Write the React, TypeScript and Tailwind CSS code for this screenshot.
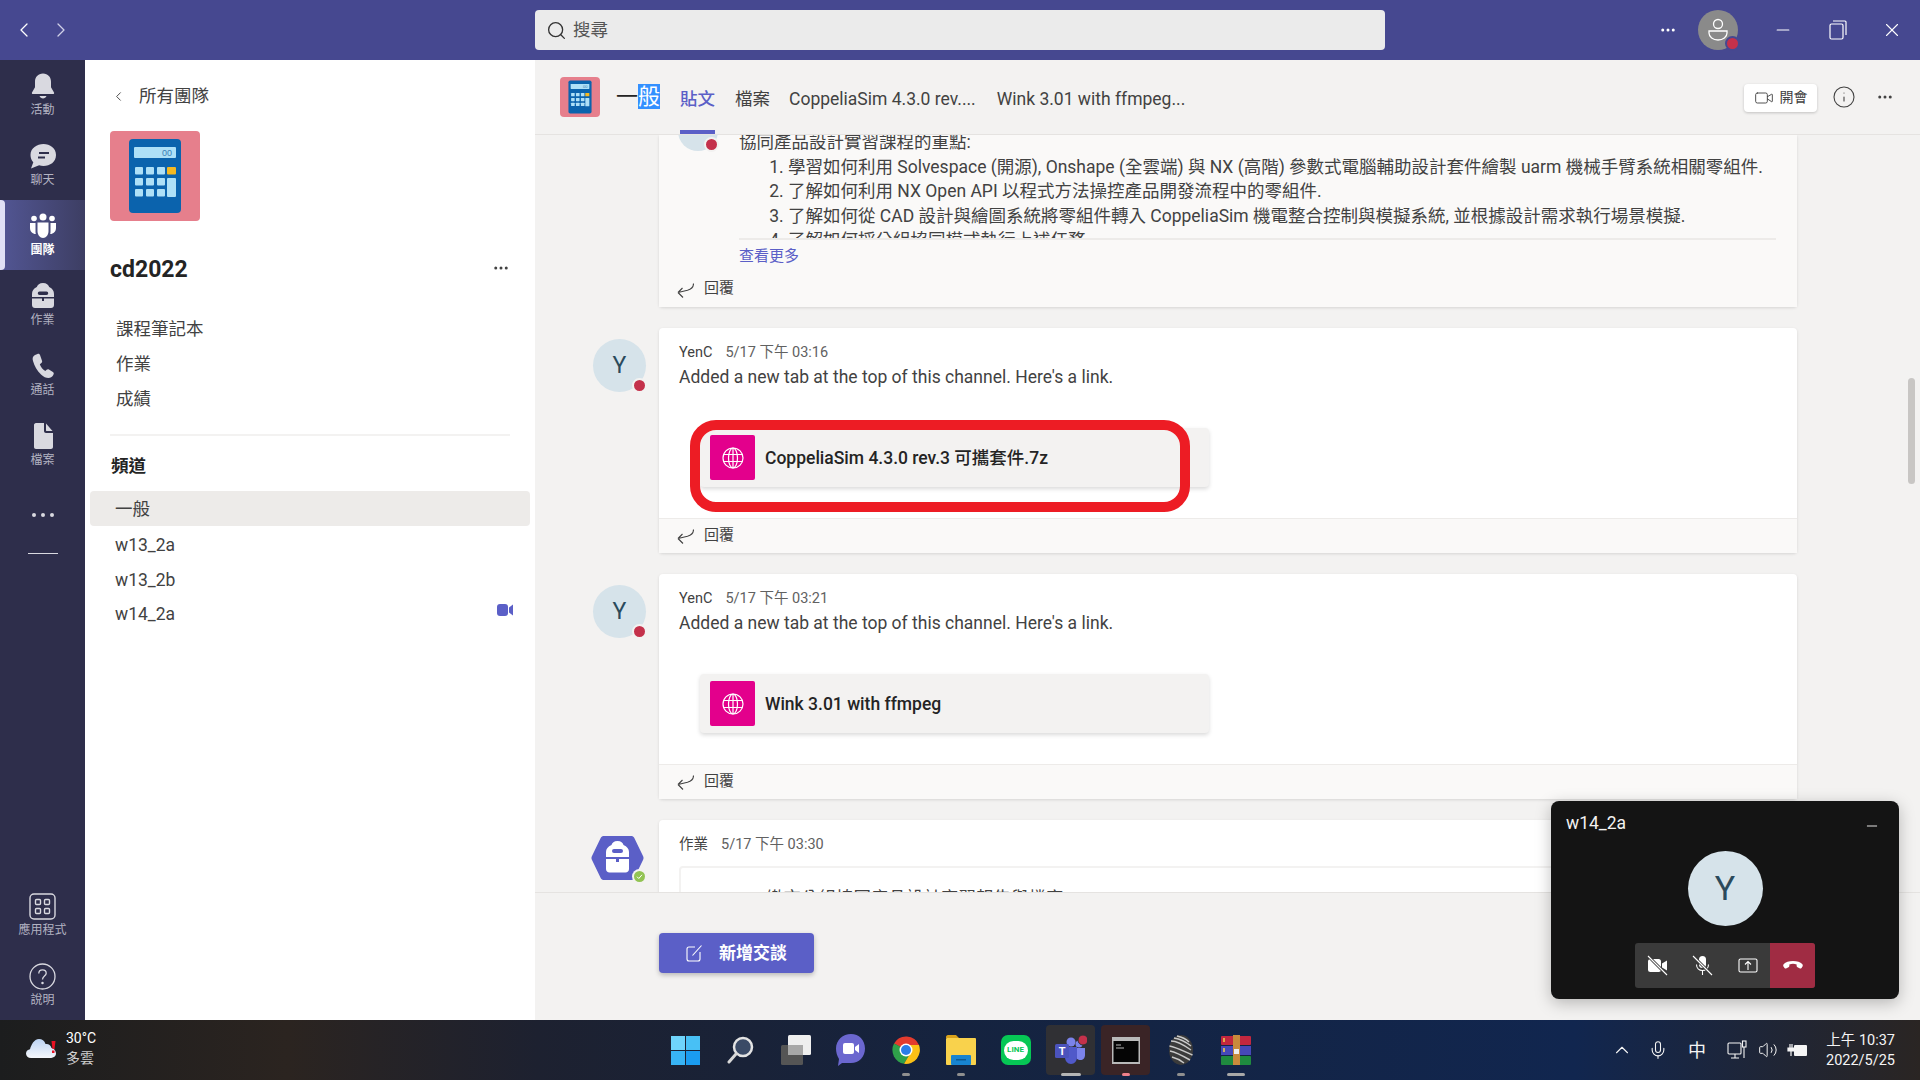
import { ChevronLeft, ChevronRight, Search, MoreHorizontal, Minus, X, Info, Video, ChevronUp, Mic, Volume2 } from 'lucide-react'
import type { ReactNode } from 'react'

const Calculator = ({ size }: { size: number }) => (
  <svg width={size} height={size} viewBox="0 0 90 90" className="block">
    <rect x="19" y="8" width="52" height="74" rx="4" fill="#0b63ad" />
    <rect x="24" y="16" width="42" height="11" rx="1" fill="#aee0f7" />
    <text x="52" y="25" fontSize="9" fill="#3b7fb5" fontFamily="Liberation Sans">00</text>
    {[25, 36, 47].map((x) =>
      [36, 47, 58].map((y) => <rect key={`${x}-${y}`} x={x} y={y} width="8" height="7.5" rx="1" fill="#aee0f7" />),
    )}
    <rect x="57" y="36" width="9" height="7.5" rx="1" fill="#f5b921" />
    <rect x="57" y="47" width="9" height="19" rx="1" fill="#aee0f7" />
  </svg>
)

const railIcons: Record<string, ReactNode> = {
  bell: (
    <svg width="28" height="28" viewBox="0 0 28 28" fill="currentColor">
      <path d="M14 1.500c-5 0-8 3.600-8 8.300v5.400l-3 5.300c-.4.800 0 1.500.9 1.500h20.200c.9 0 1.300-.7.9-1.500l-3-5.300V9.800c0-4.700-3-8.300-8-8.300z" />
      <path d="M10.500 24h7c-.6 1.600-2 2.500-3.500 2.500s-2.900-.9-3.500-2.500z" />
    </svg>
  ),
  chat: (
    <svg width="28" height="28" viewBox="0 0 28 28" fill="currentColor">
      <path fillRule="evenodd" d="M14.500 2C21 2 27 6 27 13s-6 11-12.500 11c-1.600 0-3-.3-4.400-.8L2 26.500l2.300-6.300C2.500 18.300 1.500 16 1.500 13 1.500 6 8 2 14.500 2zM10 10v2h10v-2H10zm-1 4.500v2h7v-2H9z" />
    </svg>
  ),
  team: (
    <svg width="28" height="28" viewBox="0 0 28 28" fill="currentColor">
      <circle cx="14" cy="5" r="3.500" />
      <circle cx="5" cy="6.500" r="2.800" />
      <circle cx="23" cy="6.500" r="2.800" />
      <path d="M8.500 10.500h11V19c0 4-2.500 7-5.500 7s-5.500-3-5.500-7v-8.500z" />
      <path d="M1 11h5.500v8.500c0 .9.100 1.700.3 2.500C3.500 22 1 19.500 1 16v-5zM21.500 11H27v5c0 3.500-2.500 6-5.800 6 .2-.8.300-1.600.300-2.500V11z" />
    </svg>
  ),
  bag: (
    <svg width="28" height="28" viewBox="0 0 28 28" fill="currentColor">
      <path fillRule="evenodd" d="M14 1c3.500 0 5.500 1.800 6.200 4C23.500 6.500 25 9 25 12v3H3v-3c0-3 1.500-5.500 4.800-7C8.500 2.800 10.500 1 14 1zm-3.500 8.500a1.500 1.500 0 0 0 0 3.500h7a1.500 1.500 0 0 0 0-3.500h-7z" />
      <path d="M3 16.500h10v2.500h2v-2.500h10V23c0 1.700-1.300 3-3 3H6c-1.700 0-3-1.300-3-3v-6.500z" />
    </svg>
  ),
  call: (
    <svg width="28" height="28" viewBox="0 0 28 28" fill="currentColor">
      <path d="M8.500 2 6 3C4 4 3 6 4 9c1.500 5 4 9.500 8 13.500 2.500 2.500 5 3.500 7.500 3.500 2 0 3.500-1 4.500-2.500l.6-1.200c.4-.9.100-1.700-.7-2.200l-4-2.600c-.8-.5-1.600-.4-2.300.3l-1.300 1.300c-2.500-1.500-4.500-4-5.500-6.800l1.600-1.300c.7-.6.9-1.400.6-2.200L11 3c-.4-.9-1.500-1.400-2.500-1z" />
    </svg>
  ),
  file: (
    <svg width="28" height="28" viewBox="0 0 28 28" fill="currentColor">
      <path d="M5 3c0-1 .8-2 2-2h8v8c0 1 .8 2 2 2h7v14c0 1.200-.9 2-2 2H7c-1.200 0-2-.8-2-2V3z" />
      <path d="M17 1.500 23.500 9H17.500c-.3 0-.5-.2-.5-.5v-7z" />
    </svg>
  ),
  apps: (
    <svg width="27" height="27" viewBox="0 0 27 27" fill="none" stroke="currentColor" strokeWidth="1.400">
      <rect x="1" y="1" width="25" height="25" rx="4" />
      <rect x="6.500" y="6.500" width="5" height="5" rx="1" />
      <rect x="15.500" y="6.500" width="5" height="5" rx="1" />
      <rect x="6.500" y="15.500" width="5" height="5" rx="1" />
      <rect x="15.500" y="15.500" width="5" height="5" rx="1" />
    </svg>
  ),
  help: (
    <svg width="27" height="27" viewBox="0 0 27 27" fill="none" stroke="currentColor" strokeWidth="1.300">
      <circle cx="13.500" cy="13.500" r="12.500" />
      <path d="M9.800 10.500c0-2.200 1.600-3.700 3.700-3.700s3.700 1.400 3.700 3.400c0 2.800-3.700 3-3.700 6.300" />
      <circle cx="13.500" cy="20" r=".6" fill="currentColor" />
    </svg>
  ),
}

const RailItem = ({ icon, label, active }: { icon: string; label: string; active?: boolean }) => (
  <div
    className={`relative flex h-[70px] w-full flex-col items-center justify-center gap-[2px] text-[12px] leading-[16px] ${
      active
        ? 'bg-[linear-gradient(90deg,#525694,#3d3e63)] font-bold text-white before:absolute before:left-0 before:top-0 before:h-full before:w-[5px] before:rounded-r-sm before:bg-[#dfe0f5]'
        : 'text-[#b3b3c2]'
    }`}
  >
    <span className={active ? 'text-white' : 'text-[#d9d9e0]'}>{railIcons[icon]}</span>
    <span>{label}</span>
  </div>
)

const Rail = () => (
  <nav className="flex h-full w-[85px] shrink-0 flex-col items-center bg-[#2e2e4b]">
    <RailItem icon="bell" label="活動" />
    <RailItem icon="chat" label="聊天" />
    <RailItem icon="team" label="團隊" active />
    <RailItem icon="bag" label="作業" />
    <RailItem icon="call" label="通話" />
    <RailItem icon="file" label="檔案" />
    <div className="mt-[33px] flex gap-[5px]">
      <i className="size-[4px] rounded-full bg-[#d9d9e0]" />
      <i className="size-[4px] rounded-full bg-[#d9d9e0]" />
      <i className="size-[4px] rounded-full bg-[#d9d9e0]" />
    </div>
    <div className="mt-[36px] h-px w-[30px] bg-[#d9d9e0]" />
    <div className="mt-auto flex w-full flex-col">
      <RailItem icon="apps" label="應用程式" />
      <RailItem icon="help" label="說明" />
    </div>
  </nav>
)

const TeamPanel = () => (
  <aside className="h-full w-[450px] shrink-0 bg-white text-[17.5px] text-[#424242]">
    <div className="flex h-[71px] items-center pl-[26px] pt-[1px]">
      <ChevronLeft size={15} strokeWidth={1.500} />
      <span className="ml-[13px]">所有團隊</span>
    </div>
    <div className="ml-[25px] size-[90px] rounded-[4px] bg-[#e67f8c]">
      <Calculator size={90} />
    </div>
    <div className="ml-[25px] mr-[25px] mt-[27px] flex items-center justify-between">
      <h1 className="pt-[4px] text-[23px] font-bold leading-[36px] text-[#242424]">cd2022</h1>
      <MoreHorizontal size={18} />
    </div>
    <ul className="ml-[31px] mt-[28px] flex flex-col gap-[9px] leading-[26px]">
      <li>課程筆記本</li>
      <li>作業</li>
      <li>成績</li>
    </ul>
    <div className="mx-[25px] mt-[22px] h-[2px] bg-[#f3f2f1]" />
    <h2 className="ml-[26px] mt-[17px] font-bold leading-[26px] text-[#242424]">頻道</h2>
    <ul className="mx-[5px] mt-[12px] flex flex-col">
      <li className="h-[35px] rounded-[4px] bg-[#edebe9] pl-[25px] leading-[36px]">一般</li>
      <li className="h-[35px] pl-[25px] leading-[38px]">w13_2a</li>
      <li className="h-[35px] pl-[25px] leading-[38px]">w13_2b</li>
      <li className="flex h-[35px] items-center justify-between pl-[25px] pr-[17px] leading-[38px]">
        <span>w14_2a</span>
        <svg width="16" height="12" viewBox="0 0 16 12" fill="#5b5fc7" className="-mt-[8px]">
          <rect x="0" y="0" width="11" height="12" rx="3" />
          <path d="M12 3.500 16 .5v11l-4-3z" />
        </svg>
      </li>
    </ul>
  </aside>
)

const Avatar = ({ size = 'big' }: { size?: string }) => (
  <div
    className={`relative shrink-0 rounded-full bg-[#d6e3ea] text-center text-[#2b4a5c] ${
      size === 'big' ? 'size-[53px] text-[23px] leading-[53px]' : '-mt-[24px] size-[40px]'
    }`}
  >
    {size === 'big' && 'Y'}
    <i className="absolute bottom-[-1px] right-[-1px] size-[15px] rounded-full border-2 border-[#f3f2f1] bg-[#c4314b]" />
  </div>
)

const Reply = () => (
  <div className="flex h-[35px] items-center gap-[10px] border-t border-[#edebe9] bg-[#faf9f8] pl-[18px] text-[15px] text-[#424242]">
    <svg width="17" height="15" viewBox="0 0 17 15" fill="none" stroke="#424242" strokeWidth="1.100" className="mt-[1px]">
      <path d="M16.500 .5c0 3.200-2.500 5.700-6 6.700L1 9.500M1 9.500l4.500-4.500M1 9.500l5 5" />
    </svg>
    <span className="-mt-[2px]">回覆</span>
  </div>
)

const LinkMessage = ({ time, title, mark }: { time: string; title: string; mark?: boolean }) => (
  <div className="flex pl-[58px]">
    <div className="mr-[13px] mt-[11px]">
      <Avatar />
    </div>
    <article className="flex h-[225px] w-[1138px] flex-col rounded-[4px] bg-white shadow-[0_1px_3px_rgba(0,0,0,0.12)]">
      <div className="flex-1 pl-[20px] pt-[13px]">
        <div className="flex items-center gap-[13px] text-[14.500px] leading-[24px] text-[#616161]">
          <span className="text-[#424242]">YenC</span>
          <span>{time}</span>
        </div>
        <p className="text-[17.500px] leading-[24px] text-[#424242]">Added a new tab at the top of this channel. Here's a link.</p>
        <div className="relative ml-[21px] mt-[39px] flex h-[59px] w-[509px] items-center rounded-[4px] bg-[#f3f2f1] pl-[10px] shadow-[0_2px_4px_rgba(0,0,0,0.15)]">
          <div className="flex size-[45px] items-center justify-center rounded-[2px] bg-[#e3008c]">
            <svg width="22" height="22" viewBox="0 0 22 22" fill="none" stroke="#fff" strokeWidth="1.200">
              <circle cx="11" cy="11" r="10" />
              <ellipse cx="11" cy="11" rx="4.500" ry="10" />
              <path d="M11 1v20M1.800 7.500h18.400M1.800 14.500h18.400" />
            </svg>
          </div>
          <span className="ml-[10px] mt-[2px] text-[17.500px] font-medium text-[#242424]">{title}</span>
          {mark && (
            <div className="absolute left-[-10px] top-[-8px] h-[92px] w-[500px] rounded-[26px] border-[10px] border-[#ed1c24]" />
          )}
        </div>
      </div>
      <Reply />
    </article>
  </div>
)

const MessageList = () => (
  <div className="relative h-[758px] shrink-0 overflow-hidden border-b border-[#e5e3e1]">
    <div className="flex flex-col gap-[21px]">
      <div className="flex pl-[124px]">
        <article className="flex h-[172px] w-[1138px] flex-col rounded-b-[4px] bg-[#faf9f8] shadow-[0_1px_3px_rgba(0,0,0,0.12)]">
          <div className="flex pl-[19px]">
            <Avatar size="small" />
            <div className="ml-[21px] mr-[21px] h-[105px] flex-1 overflow-hidden border-b-2 border-[#edebe9] text-[17.500px] leading-[24.500px] text-[#424242]">
              <div className="-mt-[5px]">
                <p>協同產品設計實習課程的重點:</p>
                <ol className="list-decimal pl-[49px]">
                  <li>學習如何利用 Solvespace (開源), Onshape (全雲端) 與 NX (高階) 參數式電腦輔助設計套件繪製 uarm 機械手臂系統相關零組件.</li>
                  <li>了解如何利用 NX Open API 以程式方法操控產品開發流程中的零組件.</li>
                  <li>了解如何從 CAD 設計與繪圖系統將零組件轉入 CoppeliaSim 機電整合控制與模擬系統, 並根據設計需求執行場景模擬.</li>
                  <li>了解如何採分組協同模式執行上述任務.</li>
                </ol>
              </div>
            </div>
          </div>
          <a className="ml-[80px] mt-[5px] text-[15px] leading-[22px] text-[#5b5fc7]">查看更多</a>
          <div className="mt-auto [&>div]:border-t-0">
            <Reply />
          </div>
        </article>
      </div>
      <LinkMessage time="5/17 下午 03:16" title="CoppeliaSim 4.3.0 rev.3 可攜套件.7z" mark />
      <LinkMessage time="5/17 下午 03:21" title="Wink 3.01 with ffmpeg" />
      <div className="flex pl-[56px]">
        <div className="relative mr-[15px] mt-[15px] h-[46px] w-[53px] shrink-0">
          <svg width="53" height="46" viewBox="0 0 53 46">
            <path d="M13 1h27c1.500 0 2.500.6 3.200 1.800L52 21c.7 1.300.7 2.700 0 4l-8.800 18.200C42.500 44.400 41.500 45 40 45H13c-1.500 0-2.500-.6-3.200-1.800L1 25c-.7-1.300-.7-2.700 0-4L9.800 2.800C10.500 1.600 11.500 1 13 1z" fill="#5b5fc7" />
            <path d="M26.500 6c3.500 0 5.500 2 6 4 3.500 1.500 5.500 4 5.500 7v5H15v-5c0-3 2-5.500 5.500-7 .5-2 2.500-4 6-4z" fill="#fff" />
            <path d="M15 24h10v3h3v-3h10v10c0 2-1.500 3.500-3.500 3.500h-16c-2 0-3.500-1.500-3.500-3.500V24z" fill="#fff" />
            <rect x="21" y="14" width="11" height="4" rx="2" fill="#5b5fc7" />
          </svg>
          <svg width="15" height="15" viewBox="0 0 15 15" className="absolute bottom-[-3px] right-[-3px]">
            <circle cx="7.500" cy="7.500" r="7.500" fill="#f3f2f1" />
            <circle cx="7.500" cy="7.500" r="5.500" fill="#92c353" />
            <path d="M5 7.700l1.800 1.800 3.200-3.700" stroke="#fff" strokeWidth="1" fill="none" />
          </svg>
        </div>
        <article className="h-[200px] w-[1138px] rounded-[4px] bg-white pl-[20px] pt-[13px] shadow-[0_1px_3px_rgba(0,0,0,0.12)]">
          <div className="flex items-center gap-[13px] text-[14.500px] leading-[24px] text-[#616161]">
            <span className="text-[#424242]">作業</span>
            <span>5/17 下午 03:30</span>
          </div>
          <div className="mt-[9px] h-[120px] rounded-[4px] border-2 border-[#f3f2f1] pl-[85px] pt-[17px] text-[17.500px] text-[#424242]">
            繳交分組協同產品設計實習報告與檔案
          </div>
        </article>
      </div>
    </div>
  </div>
)

const ChannelHeader = () => (
  <header className="flex h-[75px] shrink-0 items-center border-b border-[#e5e3e1] pl-[25px] pr-[26px] text-[17.500px] text-[#424242]">
    <div className="h-[40px] w-[40px] overflow-hidden rounded-[4px] bg-[#e67f8c]">
      <Calculator size={40} />
    </div>
    <div className="ml-[16px] text-[22px] leading-[30px] text-[#242424]">
      一<span className="bg-[#3390ff] text-white">般</span>
    </div>
    <div className="relative ml-[20px] flex h-full items-center pt-[4px] font-medium text-[#5b5fc7]">
      貼文
      <i className="absolute bottom-0 left-0 h-[4px] w-full bg-[#5b5fc7]" />
    </div>
    <span className="ml-[20px] pt-[4px]">檔案</span>
    <span className="ml-[19px] pt-[4px]">CoppeliaSim 4.3.0 rev....</span>
    <span className="ml-[21px] pt-[4px]">Wink 3.01 with ffmpeg...</span>
    <div className="ml-auto mt-[1px] flex h-[28px] w-[73px] items-center justify-center gap-[6px] rounded-[4px] bg-white text-[14px] shadow-[0_1px_3px_rgba(0,0,0,0.2)]">
      <Video size={20} strokeWidth={1.100} />
      <span>開會</span>
    </div>
    <Info size={24} strokeWidth={1.100} className="ml-[15px]" />
    <MoreHorizontal size={18} className="ml-[20px]" />
  </header>
)

const CallWindow = () => (
  <div className="absolute bottom-[81px] right-[21px] flex h-[198px] w-[348px] flex-col items-center rounded-[8px] bg-[#141414] shadow-[0_4px_16px_rgba(0,0,0,0.25)]">
    <div className="flex w-full items-center justify-between pl-[15px] pr-[19px] pt-[10px] text-[17.500px] leading-[24px] text-[#f3f2f1]">
      <span>w14_2a</span>
      <Minus size={16} strokeWidth={1.400} className="mt-[6px]" />
    </div>
    <div className="mt-[16px] size-[75px] rounded-full bg-[#d6e3ea] text-center text-[34px] leading-[75px] text-[#2b4a5c]">Y</div>
    <div className="mt-[17px] flex h-[45px] w-[180px] overflow-hidden rounded-[3px] bg-[#3a3a3a] text-white">
      <div className="flex w-[45px] items-center justify-center">
        <svg width="21" height="21" viewBox="0 0 21 21">
          <rect x="1" y="4" width="13" height="13" rx="2.500" fill="#fff" />
          <path d="M15 8.500 20 5.500v10L15 12.500z" fill="#fff" />
          <path d="M1 1l19 19" stroke="#3a3a3a" strokeWidth="3" />
          <path d="M1 1l19 19" stroke="#fff" strokeWidth="1.100" />
        </svg>
      </div>
      <div className="flex w-[45px] items-center justify-center">
        <svg width="21" height="21" viewBox="0 0 21 21" fill="none">
          <rect x="7" y="1" width="7" height="12" rx="3.500" fill="#fff" />
          <path d="M4.500 9.500c0 3.500 2.500 6 6 6s6-2.500 6-6M10.500 15.500V20" stroke="#fff" strokeWidth="1.100" />
          <path d="M1 1l19 19" stroke="#3a3a3a" strokeWidth="3" />
          <path d="M1 1l19 19" stroke="#fff" strokeWidth="1.100" />
        </svg>
      </div>
      <div className="flex w-[45px] items-center justify-center">
        <svg width="20" height="15" viewBox="0 0 20 15" fill="none" stroke="#fff" strokeWidth="1.100">
          <rect x="1" y="1" width="18" height="13" rx="1.500" />
          <path d="M10 12V4M7 6.500 10 3.500l3 3" />
        </svg>
      </div>
      <div className="flex w-[45px] items-center justify-center bg-[#a02c43]">
        <svg width="20" height="9" viewBox="0 0 20 9" fill="#fff">
          <path d="M10 0C6 0 2.500 1 .8 3c-.8 1-.8 2 0 3l.7 1c.5.600 1.300.7 2 .3l2-1c.7-.4 1-1 .9-1.800l-.1-1c1.200-.5 2.500-.7 3.700-.7s2.500.2 3.700.7l-.1 1c-.1.800.2 1.400.9 1.800l2 1c.7.4 1.500.3 2-.3l.7-1c.8-1 .8-2 0-3C17.500 1 14 0 10 0z" />
        </svg>
      </div>
    </div>
  </div>
)

const TaskSlot = ({ children, tile, bar }: { children: ReactNode; tile?: string; bar?: string }) => (
  <div className="relative flex h-[50px] w-[55px] items-center justify-center">
    {tile && <div className={`absolute inset-y-0 left-[3px] right-[3px] rounded-[4px] ${tile}`} />}
    <div className="relative">{children}</div>
    {bar && <i className={`absolute bottom-[-1px] left-1/2 h-[3px] -translate-x-1/2 rounded-full ${bar}`} />}
  </div>
)

const Taskbar = () => (
  <footer className="relative flex h-[60px] shrink-0 items-center justify-center bg-[linear-gradient(90deg,#1c1d1e_0%,#2b2420_15%,#1d2130_28%,#15233f_50%,#11264f_82%,#2a2523_100%)] pl-[1px] text-white">
    <div className="absolute left-[25px] top-[8px] flex items-center">
      <svg width="32" height="24" viewBox="0 0 32 24">
        <defs>
          <linearGradient id="cloud" x1="0" y1="0" x2="0" y2="1">
            <stop offset="0" stopColor="#bcd3f3" />
            <stop offset="1" stopColor="#f5f7fb" />
          </linearGradient>
        </defs>
        <path d="M6 22c-3 0-5-2-5-4.500 0-2.500 2-4 4-4.200C6 9 9 3 14 3c3 0 5.500 1.500 6.500 5 3-.5 5 1 6 4 2 .3 4.500 2.500 4.500 5.500S28 22 25 22H6z" fill="url(#cloud)" />
        <path d="M26.500 5h4l-1 8h-2zM27 14.500h2.500v2.500H27z" fill="#e81123" />
      </svg>
      <div className="ml-[9px] text-[14px] leading-[20px]">
        <div>30°C</div>
        <div className="text-[#d0d0d0]">多雲</div>
      </div>
    </div>
    <TaskSlot>
      <svg width="29" height="29" viewBox="0 0 29 29">
        <rect x="0" y="0" width="14" height="14" fill="#6fd4fb" />
        <rect x="15" y="0" width="14" height="14" fill="#48c0f5" />
        <rect x="0" y="15" width="14" height="14" fill="#38b4f5" />
        <rect x="15" y="15" width="14" height="14" fill="#1a9cf0" />
      </svg>
    </TaskSlot>
    <TaskSlot>
      <svg width="28" height="28" viewBox="0 0 28 28" fill="none">
        <circle cx="16" cy="11" r="9" fill="#3a4a66" stroke="#e3e3e3" strokeWidth="2.500" />
        <path d="M9 18 2 26" stroke="#d8d8d8" strokeWidth="3" strokeLinecap="round" />
      </svg>
    </TaskSlot>
    <TaskSlot>
      <svg width="30" height="30" viewBox="0 0 30 30">
        <rect x="0" y="10" width="22" height="20" rx="1.500" fill="#555" />
        <rect x="7" y="0" width="23" height="20" rx="1.500" fill="#efefef" />
        <rect x="7" y="10" width="15" height="10" fill="#a8a8a8" />
      </svg>
    </TaskSlot>
    <TaskSlot>
      <svg width="29" height="34" viewBox="0 0 29 34">
        <path d="M15 1c8 0 14 6 14 14.500S23 30 15 30H6l-4 3 1-7C1 23 0 19 0 15.500 0 7 7 1 15 1z" fill="#6b67cf" />
        <rect x="7" y="10" width="11" height="11" rx="2" fill="#fff" />
        <path d="M19 14l4-3v9l-4-3z" fill="#fff" />
      </svg>
    </TaskSlot>
    <TaskSlot bar="w-[8px] bg-[#8f8f8f]">
      <svg width="28" height="28" viewBox="0 0 28 28">
        <path d="M14 14 2 7.500A14 14 0 0 1 27 9z" fill="#e33b2e" />
        <path d="M2 7.500A14 14 0 0 0 12 27.800L19 16z" fill="#2fa04a" />
        <path d="M27 9A14 14 0 0 1 12 27.800L19 16 14 9z" fill="#fbc116" />
        <circle cx="14" cy="14" r="6.500" fill="#fff" />
        <circle cx="14" cy="14" r="5" fill="#2b7de9" />
      </svg>
    </TaskSlot>
    <TaskSlot bar="w-[8px] bg-[#8f8f8f]">
      <svg width="30" height="30" viewBox="0 0 30 30">
        <path d="M0 2c0-1 .7-2 2-2h8l3 3h-13z" fill="#d9a21b" />
        <rect x="0" y="3" width="30" height="27" fill="#f9d24c" rx="1" />
        <rect x="5" y="20" width="20" height="10" rx="1" fill="#1884d0" />
        <rect x="10" y="24" width="10" height="1.500" fill="#0d5a94" />
      </svg>
    </TaskSlot>
    <TaskSlot>
      <div className="flex size-[30px] items-center justify-center rounded-[7px] bg-[#06c755]">
        <div className="flex h-[19px] w-[24px] items-center justify-center rounded-full bg-white text-[8px] font-bold leading-none text-[#06c755]">LINE</div>
      </div>
    </TaskSlot>
    <TaskSlot tile="bg-[#303034]" bar="w-[20px] bg-[#b5b5b5]">
      <svg width="32" height="30" viewBox="0 0 32 30">
        <circle cx="24" cy="9" r="3.500" fill="#7b83eb" />
        <circle cx="16" cy="7" r="4.500" fill="#7b83eb" />
        <path d="M10 12h12v10c0 4-2.500 7-6 7s-6-3-6-7z" fill="#5059c9" />
        <path d="M22 13h8v7c0 3-2 5-4.500 5-1.500 0-2.500-.5-3.500-1z" fill="#7b83eb" />
        <rect x="0" y="9" width="14" height="14" rx="1.500" fill="#4b53bc" />
        <text x="7" y="20" textAnchor="middle" fontSize="11" fontWeight="700" fill="#fff" fontFamily="Liberation Sans">T</text>
        <circle cx="28" cy="5" r="5" fill="#c4314b" stroke="#303034" />
      </svg>
    </TaskSlot>
    <TaskSlot tile="bg-[#3a2426]" bar="w-[8px] bg-[#f0808a]">
      <svg width="28" height="27" viewBox="0 0 28 27">
        <rect x="0" y="0" width="28" height="27" fill="#b9b9b9" />
        <rect x="1.500" y="4" width="25" height="21" fill="#050505" />
        <path d="M4 8h5M4 11h8" stroke="#bbb" strokeWidth="1" />
      </svg>
    </TaskSlot>
    <TaskSlot bar="w-[8px] bg-[#8f8f8f]">
      <svg width="28" height="30" viewBox="0 0 28 30">
        <ellipse cx="14" cy="15" rx="12" ry="15" fill="#3b3b3b" />
        <path d="M4 6c6 0 13 4 20 9M2.500 11c6 1 14 5 23 9M3 16c5 1 13 5 20 9M5 22c4 1 8 3 12 6M7 3c6 1 12 4 17 8M10 1c5 1 9 3 12 6" stroke="#c9c9c9" strokeWidth="1.500" fill="none" />
      </svg>
    </TaskSlot>
    <TaskSlot bar="w-[18px] bg-[#a8a8a8]">
      <svg width="30" height="30" viewBox="0 0 30 30">
        <rect x="0" y="1" width="30" height="9" rx="1" fill="#c3273f" />
        <rect x="0" y="11" width="30" height="9" fill="#4648b8" />
        <rect x="0" y="21" width="30" height="9" rx="1" fill="#1f8a3f" />
        <rect x="12" y="0" width="7" height="30" fill="#c98a3c" />
        <rect x="13" y="14" width="5" height="5" fill="#eee" />
        <path d="M3 3v4M3 13v4" stroke="#f5d24c" strokeWidth="1.500" />
      </svg>
    </TaskSlot>
    <div className="absolute right-[25px] top-0 flex h-full items-center text-[#f5f5f5]">
      <ChevronUp size={22} strokeWidth={1.200} className="mr-[15px]" />
      <Mic size={20} strokeWidth={1.300} className="mr-[20px]" />
      <span className="mr-[21px] text-[18px]">中</span>
      <svg width="20" height="20" viewBox="0 0 20 20" fill="none" stroke="#f5f5f5" strokeWidth="1.100" className="mr-[11px]">
        <rect x="1" y="3" width="13" height="11" rx="1" />
        <path d="M4 18h8M8 14v4" />
        <rect x="15.500" y="1" width="3.500" height="6" />
        <path d="M17 7v11" />
      </svg>
      <Volume2 size={20} strokeWidth={1.200} className="mr-[9px]" />
      <svg width="22" height="18" viewBox="0 0 22 18" className="mr-[14px]">
        <rect x="7" y="4" width="13" height="11" rx="1" fill="#f5f5f5" />
        <path d="M1 7h6v3H1zM3 3v4M5 3v4M4 10v5" stroke="#f5f5f5" strokeWidth="1.200" fill="#f5f5f5" />
      </svg>
      <div className="w-[72px] pt-[1px] text-right text-[14.500px] leading-[20px]">
        <div>上午 10:37</div>
        <div>2022/5/25</div>
      </div>
    </div>
  </footer>
)

export default function App() {
  return (
    <div className="relative flex h-[1080px] w-[1920px] flex-col overflow-hidden bg-[#f3f2f1] font-['Roboto','Noto_Sans_CJK_TC',sans-serif]">
      <div className="flex h-[60px] shrink-0 items-center bg-[#464890] text-white">
        <ChevronLeft size={24} strokeWidth={1.300} className="ml-[12px]" />
        <ChevronRight size={24} strokeWidth={1.300} className="ml-[13px] text-[#d0d1e8]" />
        <div className="ml-[462px] flex h-[40px] w-[850px] items-center rounded-[4px] bg-[#ebebeb] pl-[11px] text-[17.500px] text-[#555]">
          <Search size={21} strokeWidth={1.500} className="text-[#333]" />
          <span className="ml-[6px]">搜尋</span>
        </div>
        <MoreHorizontal size={18} className="ml-[274px]" />
        <div className="relative ml-[21px] flex size-[40px] items-center justify-center rounded-full bg-[#8a8a8a]">
          <svg width="22" height="24" viewBox="0 0 22 24" fill="none" stroke="#fff" strokeWidth="1.300">
            <circle cx="11" cy="6" r="4.500" />
            <path d="M2 13h18v2c0 4-4 7-9 7s-9-3-9-7v-2z" />
          </svg>
          <i className="absolute bottom-[-1px] right-[-2px] size-[15px] rounded-full border-2 border-[#464890] bg-[#c4314b]" />
        </div>
        <Minus size={20} strokeWidth={1.400} className="ml-[35px]" />
        <svg width="18" height="20" viewBox="0 0 18 20" fill="none" stroke="currentColor" strokeWidth="1.200" className="ml-[36px]">
          <rect x="1" y="4" width="13" height="15" rx="1.500" />
          <path d="M4 1h12c.6 0 1 .4 1 1v13" />
        </svg>
        <X size={22} strokeWidth={1.200} className="ml-[34px]" />
      </div>
      <div className="flex min-h-0 flex-1">
        <Rail />
        <TeamPanel />
        <main className="relative flex min-w-0 flex-1 flex-col">
          <ChannelHeader />
          <MessageList />
          <div className="ml-[124px] mt-[40px] flex h-[40px] w-[155px] items-center rounded-[4px] bg-[#5b5fc7] pl-[27px] text-[17px] font-semibold text-white shadow-[0_2px_5px_rgba(0,0,0,0.25)]">
            <svg width="17" height="18" viewBox="0 0 17 18" fill="none" stroke="#fff" strokeWidth="1.100">
              <path d="M9 3H3c-1.200 0-2 .8-2 2v10c0 1.200.8 2 2 2h9c1.200 0 2-.8 2-2V8" />
              <path d="M6.500 11.500 15.500 1.500" />
            </svg>
            <span className="ml-[16px] pt-[2px]">新增交談</span>
          </div>
          <div className="absolute right-[5px] top-[318px] h-[106px] w-[7px] rounded-full bg-[#c8c6c4]" />
        </main>
      </div>
      <Taskbar />
      <CallWindow />
    </div>
  )
}
